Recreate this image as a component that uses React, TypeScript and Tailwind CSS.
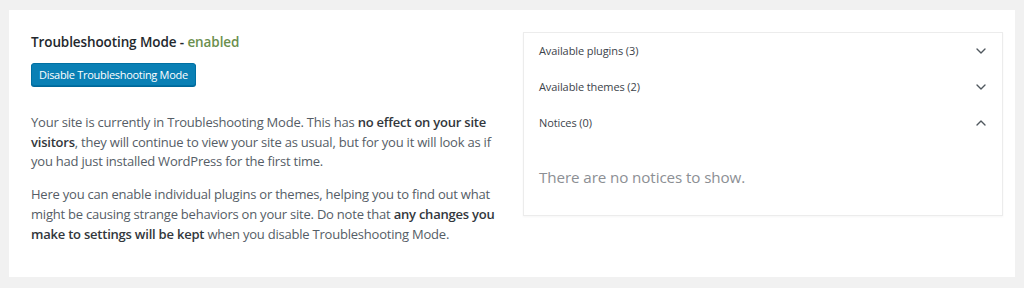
import { ChevronDown, ChevronUp } from "lucide-react";

const rows = [
  { label: "Available plugins (3)", open: false },
  { label: "Available themes (2)", open: false },
  { label: "Notices (0)", open: true },
];

export default function App() {
  return (
    <div
      className="w-[1024px] h-[288px] bg-[#f1f1f1] pt-[10px] pl-[9px]"
      style={{ fontFamily: '"Open Sans", "Noto Sans", sans-serif' }}
    >
      <div className="w-[1006px] h-[267px] bg-white pt-[22px] pl-[22px] pr-[12px] flex gap-[26px]">
        {/* Left column */}
        <div className="w-[466px] shrink-0">
          <h2 className="text-[13.5px] leading-[20px] font-semibold text-[#23282d] tracking-[-0.1px]">
            Troubleshooting Mode - <span className="text-[#6b8f4e] font-semibold">enabled</span>
          </h2>
          <button className="mt-[11px] h-[23px] px-[7px] rounded-[3px] bg-[#0a80b5] border border-[#0070a3] text-white text-[11px] leading-none tracking-[-0.3px] shadow-[0_1px_0_#006799]">
            Disable Troubleshooting Mode
          </button>
          <p className="mt-[27px] text-[13px] leading-[19.5px] text-[#555d66] tracking-[-0.22px] whitespace-nowrap">
            Your site is currently in Troubleshooting Mode. This has{" "}
            <b className="font-semibold text-[#32373c]">no effect on your site</b>
            <br />
            <b className="font-semibold text-[#32373c]">visitors</b>, they will continue to view your site
            as usual, but for you it will look as if
            <br />
            you had just installed WordPress for the first time.
          </p>
          <p className="mt-[12px] text-[13px] leading-[20px] text-[#555d66] tracking-[-0.22px] whitespace-nowrap">
            Here you can enable individual plugins or themes, helping you to find out what
            <br />
            might be causing strange behaviors on your site. Do note that{" "}
            <b className="font-semibold text-[#32373c]">any changes you</b>
            <br />
            <b className="font-semibold text-[#32373c]">make to settings will be kept</b> when you disable
            Troubleshooting Mode.
          </p>
        </div>

        {/* Right panel */}
        <div className="w-[481px] h-[184px] border border-[#ececec] shadow-[0_1px_2px_rgba(0,0,0,0.04)]">
          {rows.map((r) => (
            <div key={r.label} className="h-[36px] flex items-center justify-between pl-[15px] pr-[13px]">
              <span className="text-[11px] text-[#3c434a] tracking-[-0.1px]">{r.label}</span>
              {r.open ? (
                <ChevronUp className="w-[16px] h-[16px] text-[#50575e]" strokeWidth={2} />
              ) : (
                <ChevronDown className="w-[16px] h-[16px] text-[#50575e]" strokeWidth={2} />
              )}
            </div>
          ))}
          <p className="mt-[24px] pl-[15px] text-[15.2px] leading-[24px] text-[#8c8f94] tracking-[-0.1px]">
            There are no notices to show.
          </p>
        </div>
      </div>
    </div>
  );
}
